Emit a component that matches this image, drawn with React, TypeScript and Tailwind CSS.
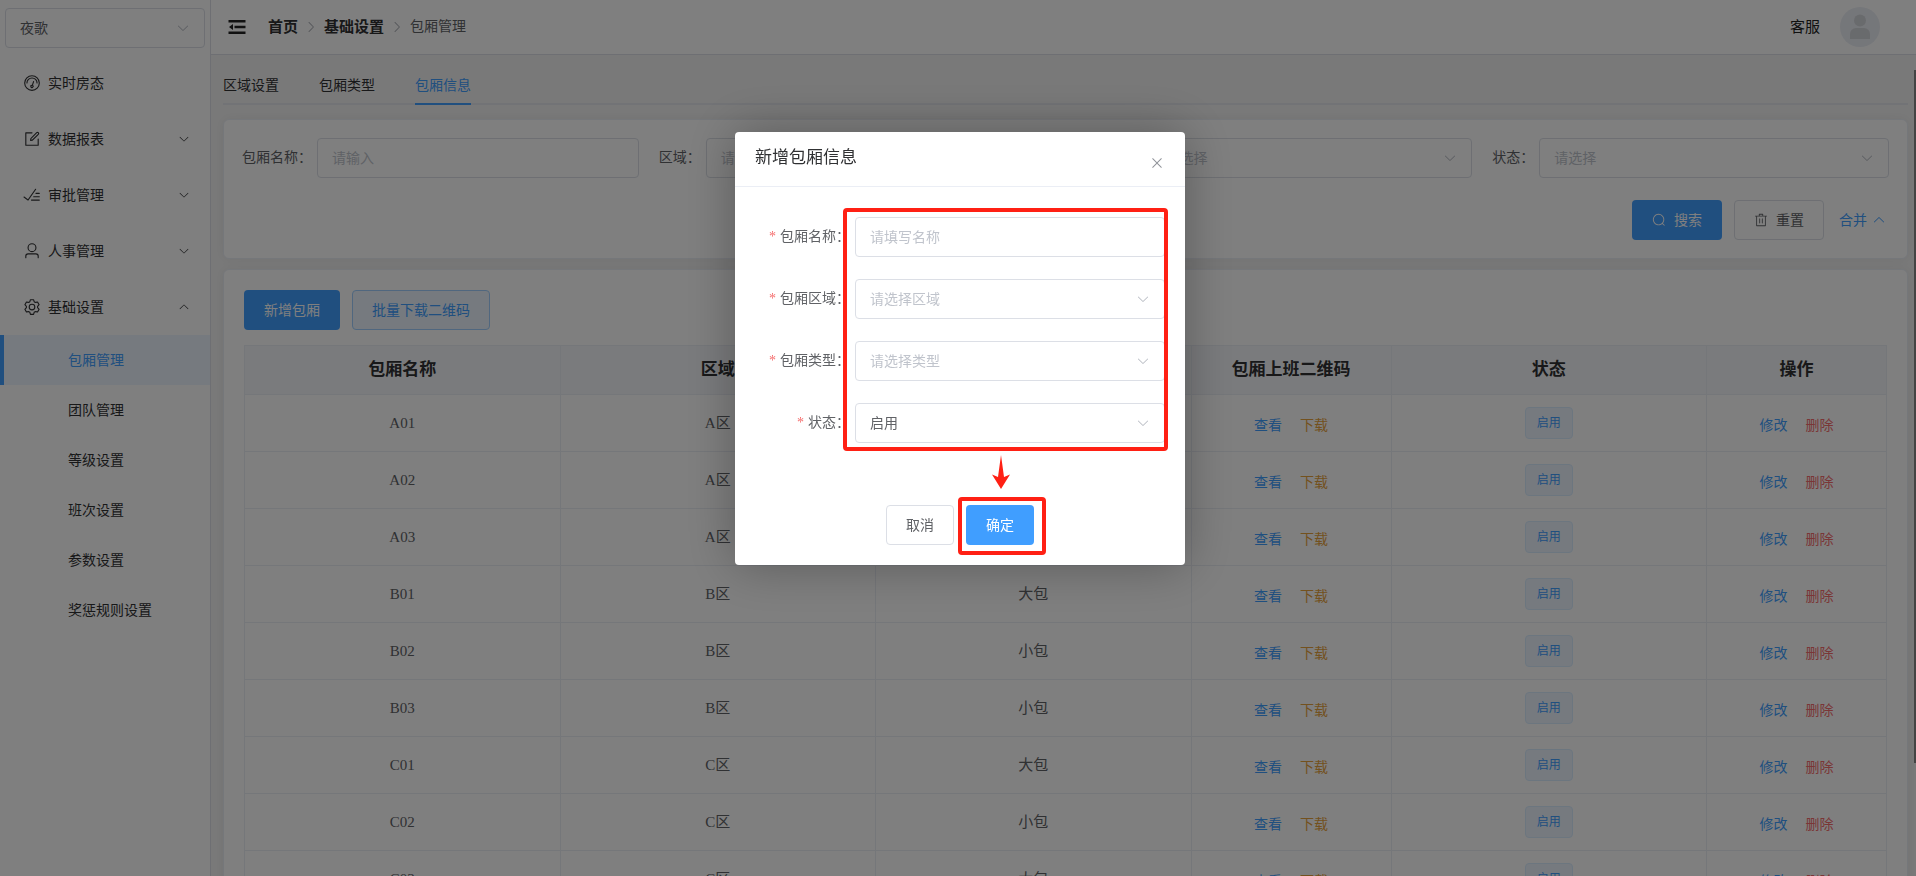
import React from 'react';

const ICONS = {
  odometer:
    'M512 896a384 384 0 1 0 0-768 384 384 0 0 0 0 768m0 64a448 448 0 1 1 0-896 448 448 0 0 1 0 896M192 512a320 320 0 1 1 640 0 32 32 0 1 1-64 0 256 256 0 1 0-512 0 32 32 0 0 1-64 0M570.432 627.84A96 96 0 1 1 509.568 608l60.992-187.776A32 32 0 1 1 631.424 440l-60.992 187.776zM502.08 734.464a32 32 0 1 0 19.84-60.928 32 32 0 0 0-19.84 60.928',
  edit: 'M832 512a32 32 0 1 1 64 0v352a32 32 0 0 1-32 32H160a32 32 0 0 1-32-32V160a32 32 0 0 1 32-32h352a32 32 0 0 1 0 64H192v640h640zM469.952 554.24l52.8-7.552L847.104 222.4a32 32 0 1 0-45.248-45.248L477.44 501.44l-7.552 52.8zm422.4-422.4a96 96 0 0 1 0 135.808l-331.84 331.84a32 32 0 0 1-18.112 9.088L436.8 623.68a32 32 0 0 1-36.224-36.224l15.104-105.6a32 32 0 0 1 9.024-18.112l331.904-331.84a96 96 0 0 1 135.744 0z',
  finished:
    'M280.768 753.728 691.456 167.04a32 32 0 1 1 52.416 36.672L314.24 817.472a32 32 0 0 1-45.44 7.296l-230.4-172.8a32 32 0 0 1 38.4-51.2zM736 448a32 32 0 1 1 0-64h192a32 32 0 1 1 0 64zM608 640a32 32 0 0 1 0-64h319.936a32 32 0 1 1 0 64zM480 832a32 32 0 1 1 0-64h447.936a32 32 0 1 1 0 64z',
  user: 'M512 512a192 192 0 1 0 0-384 192 192 0 0 0 0 384m0 64a256 256 0 1 1 0-512 256 256 0 0 1 0 512m320 320v-96a96 96 0 0 0-96-96H288a96 96 0 0 0-96 96v96a32 32 0 1 1-64 0v-96a160 160 0 0 1 160-160h448a160 160 0 0 1 160 160v96a32 32 0 1 1-64 0',
  setting:
    'M600.704 64a32 32 0 0 1 30.464 22.208l35.2 109.376c14.784 7.232 28.928 15.36 42.432 24.512l112.384-24.192a32 32 0 0 1 34.432 15.36L944.32 364.8a32 32 0 0 1-4.032 37.504l-77.12 85.12a357 357 0 0 1 0 49.024l77.12 85.248a32 32 0 0 1 4.032 37.504l-88.704 153.6a32 32 0 0 1-34.432 15.296L708.8 803.904c-13.44 9.088-27.648 17.28-42.368 24.512l-35.264 109.376A32 32 0 0 1 600.704 960H423.296a32 32 0 0 1-30.464-22.208L357.696 828.48a352 352 0 0 1-42.56-24.64l-112.32 24.256a32 32 0 0 1-34.432-15.36L79.68 659.2a32 32 0 0 1 4.032-37.504l77.12-85.248a357 357 0 0 1 0-48.896l-77.12-85.248A32 32 0 0 1 79.68 364.8l88.704-153.6a32 32 0 0 1 34.432-15.296l112.32 24.256c13.568-9.152 27.776-17.408 42.56-24.64l35.2-109.312A32 32 0 0 1 423.232 64H600.64zm-23.424 64H446.72l-36.352 113.088-24.512 11.968a294 294 0 0 0-34.816 20.096l-22.656 15.36-116.224-25.088-65.28 113.152 79.68 88.192-1.92 27.136a293 293 0 0 0 0 40.192l1.92 27.136-79.808 88.192 65.344 113.152 116.224-25.024 22.656 15.296a294 294 0 0 0 34.816 20.096l24.512 11.968L446.72 896h130.688l36.48-113.152 24.448-11.904a288 288 0 0 0 34.752-20.096l22.592-15.296 116.288 25.024 65.28-113.152-79.744-88.192 1.92-27.136a293 293 0 0 0 0-40.256l-1.92-27.136 79.808-88.128-65.344-113.152-116.288 24.96-22.592-15.232a288 288 0 0 0-34.752-20.096l-24.448-11.904L577.344 128zM512 320a192 192 0 1 1 0 384 192 192 0 0 1 0-384m0 64a128 128 0 1 0 0 256 128 128 0 0 0 0-256',
  search:
    'm795.904 750.72 124.992 124.928a32 32 0 0 1-45.248 45.248L750.656 795.904a416 416 0 1 1 45.248-45.248zM480 832a352 352 0 1 0 0-704 352 352 0 0 0 0 704',
  trash:
    'M160 256H96a32 32 0 0 1 0-64h256V95.936a32 32 0 0 1 32-32h256a32 32 0 0 1 32 32V192h256a32 32 0 1 1 0 64h-64v672a32 32 0 0 1-32 32H192a32 32 0 0 1-32-32zm448-64v-64H416v64zM224 896h576V256H224zm192-128a32 32 0 0 1-32-32V416a32 32 0 0 1 64 0v320a32 32 0 0 1-32 32m192 0a32 32 0 0 1-32-32V416a32 32 0 0 1 64 0v320a32 32 0 0 1-32 32',
  down: 'M831.872 340.864 512 652.672 192.128 340.864a30.592 30.592 0 0 0-42.752 0 29.12 29.12 0 0 0 0 41.6L489.664 714.24a32 32 0 0 0 44.672 0l340.288-331.712a29.12 29.12 0 0 0 0-41.728 30.592 30.592 0 0 0-42.752 0z',
  close:
    'M764.288 214.592 512 466.88 259.712 214.592a31.936 31.936 0 0 0-45.12 45.12L466.752 512 214.528 764.224a31.936 31.936 0 1 0 45.12 45.184L512 557.184l252.288 252.288a31.936 31.936 0 0 0 45.12-45.12L557.12 512.064l252.288-252.352a31.936 31.936 0 1 0-45.12-45.184z',
};

type IconName = keyof typeof ICONS;

const Icon: React.FC<{ name: IconName; className?: string }> = ({ name, className = '' }) => (
  <svg viewBox="0 0 1024 1024" fill="currentColor" className={`shrink-0 ${className}`} aria-hidden="true">
    <path d={ICONS[name]} />
  </svg>
);

const menus: { label: string; icon: IconName; open?: boolean; leaf?: boolean }[] = [
  { label: '实时房态', icon: 'odometer', leaf: true },
  { label: '数据报表', icon: 'edit' },
  { label: '审批管理', icon: 'finished' },
  { label: '人事管理', icon: 'user' },
  { label: '基础设置', icon: 'setting', open: true },
];

const subMenus = ['包厢管理', '团队管理', '等级设置', '班次设置', '参数设置', '奖惩规则设置'];

const tabs = ['区域设置', '包厢类型', '包厢信息'];

const rows = [
  { name: 'A01', area: 'A区', type: '大包' },
  { name: 'A02', area: 'A区', type: '小包' },
  { name: 'A03', area: 'A区', type: '小包' },
  { name: 'B01', area: 'B区', type: '大包' },
  { name: 'B02', area: 'B区', type: '小包' },
  { name: 'B03', area: 'B区', type: '小包' },
  { name: 'C01', area: 'C区', type: '大包' },
  { name: 'C02', area: 'C区', type: '小包' },
  { name: 'C03', area: 'C区', type: '大包' },
];

const controlClass =
  'block w-full h-10 px-3.5 pt-[2px] rounded border border-[#dcdfe6] bg-white text-sm placeholder:text-[#c0c4cc] outline-none';

interface SelectBoxProps {
  id: string;
  value: string;
  filled?: boolean;
  label?: string;
}

const SelectBox: React.FC<SelectBoxProps> = ({ id, value, filled, label }) => (
  <div className="relative flex-1 min-w-0">
    <select
      id={id}
      aria-label={label}
      defaultValue={value}
      className={`${controlClass} appearance-none ${filled ? 'text-[#606266]' : 'text-[#c0c4cc]'}`}
    >
      <option>{value}</option>
    </select>
    <Icon name="down" className="absolute right-[15px] top-[13px] w-3.5 h-3.5 text-[#b4b8c0] pointer-events-none" />
  </div>
);

const Colon: React.FC = () => <span className="inline-block w-3.5 text-left whitespace-nowrap">：</span>;

const Sidebar: React.FC = () => (
  <aside className="w-[211px] shrink-0 bg-white border-r border-[#dcdfe6]">
    <div className="flex px-[5px] pt-2 pb-[7px]">
      <SelectBox id="store" label="门店" value="夜歌" filled />
    </div>
    <nav>
      {menus.map((item) => (
        <a key={item.label} href="#" className="flex items-center h-14 px-5 text-sm text-[#303133]">
          <span className="flex justify-center w-6 mr-1">
            <Icon name={item.icon} className="w-[18px] h-[18px]" />
          </span>
          <span className="flex-1 pt-[2px]">{item.label}</span>
          {!item.leaf && <Icon name="down" className={`w-3 h-3 ${item.open ? 'rotate-180' : ''}`} />}
        </a>
      ))}
      {subMenus.map((label, i) => (
        <a
          key={label}
          href="#"
          className={`flex items-center h-[50px] border-l-4 pl-16 pt-[2px] text-sm ${
            i === 0 ? 'border-[#409eff] bg-[#ecf5ff] text-[#409eff]' : 'border-transparent text-[#303133]'
          }`}
        >
          {label}
        </a>
      ))}
    </nav>
  </aside>
);

const Header: React.FC = () => (
  <header className="flex items-center h-[55px] pl-[17px] pr-9 bg-white border-b border-[#dcdfe6]">
    <button type="button" aria-label="菜单" className="mr-[22px]">
      <svg viewBox="0 0 18 14" className="w-[18px] h-3.5 text-[#222]" fill="currentColor">
        <path d="M.5 0h17v2.600H.5zM6.500 5.700h11v2.600h-11zM.5 11.400h17V14H.5zM5 4v6L1 7z" />
      </svg>
    </button>
    <nav className="flex items-center text-[#303133]">
      <a href="#" className="text-[15px] font-bold">首页</a>
      <Icon name="down" className="w-3.5 h-3.5 mx-[6px] -rotate-90 text-[#a8abb2]" />
      <a href="#" className="text-[15px] font-bold">基础设置</a>
      <Icon name="down" className="w-3.5 h-3.5 mx-[6px] -rotate-90 text-[#a8abb2]" />
      <span className="text-sm text-[#606266]">包厢管理</span>
    </nav>
    <a href="#" className="ml-auto mr-5 text-[15px] text-[#222]">客服</a>
    <svg viewBox="0 0 40 40" className="w-10 h-10">
      <circle cx="20" cy="20" r="20" fill="#ebeef5" />
      <circle cx="20" cy="13.500" r="6" fill="#d3d6db" />
      <path d="M10 32v-5a6 6 0 0 1 6-6h8a6 6 0 0 1 6 6v5z" fill="#d3d6db" />
    </svg>
  </header>
);

const cardClass = 'bg-white border border-[#ebeef5] rounded-md shadow-[0_0_12px_rgba(0,0,0,0.06)]';

const SearchCard: React.FC = () => (
  <section className={`${cardClass} mt-3.5 px-[18px] py-[18px]`}>
    <div className="grid grid-cols-4 gap-5 text-sm text-[#606266]">
      <div className="flex items-center">
        <label htmlFor="q-name" className="shrink-0 pr-[5px]">包厢名称<Colon /></label>
        <input id="q-name" placeholder="请输入" className={controlClass} />
      </div>
      <div className="flex items-center">
        <label htmlFor="q-area" className="shrink-0 pr-[5px]">区域<Colon /></label>
        <SelectBox id="q-area" value="请选择" />
      </div>
      <div className="flex items-center">
        <label htmlFor="q-type" className="shrink-0 pr-[5px]">包厢类型<Colon /></label>
        <SelectBox id="q-type" value="请选择" />
      </div>
      <div className="flex items-center">
        <label htmlFor="q-state" className="shrink-0 pr-[5px]">状态<Colon /></label>
        <SelectBox id="q-state" value="请选择" />
      </div>
    </div>
    <div className="flex justify-end items-center mt-[22px] text-sm">
      <button type="button" className="flex items-center justify-center gap-2 w-[90px] h-10 rounded bg-[#409eff] text-white">
        <Icon name="search" className="w-3.5 h-3.5" />
        <span className="pt-[2px]">搜索</span>
      </button>
      <button
        type="button"
        className="flex items-center justify-center gap-2 w-[90px] h-10 ml-3 rounded border border-[#dcdfe6] text-[#606266]"
      >
        <Icon name="trash" className="w-3.5 h-3.5" />
        <span className="pt-[2px]">重置</span>
      </button>
      <button type="button" className="flex items-center gap-[5px] ml-[15px] mr-[3px] text-[#409eff]">
        <span className="pt-[2px]">合并</span>
        <Icon name="down" className="w-3.5 h-3.5 rotate-180" />
      </button>
    </div>
  </section>
);

const TableCard: React.FC = () => (
  <section className={`${cardClass} mt-[10px] p-5`}>
    <div className="flex gap-3 text-sm">
      <button type="button" className="h-10 px-5 pt-[2px] rounded bg-[#409eff] text-white">新增包厢</button>
      <button type="button" className="h-10 px-[19px] pt-[2px] rounded border border-[#a0cfff] bg-[#ecf5ff] text-[#409eff]">
        批量下载二维码
      </button>
    </div>
    <table className="w-full mt-[15px] table-fixed border-collapse text-center text-[15px] text-[#606266] [&_td]:border [&_td]:border-[#ebeef5] [&_th]:border [&_th]:border-[#ebeef5]">
      <colgroup>
        <col />
        <col />
        <col />
        <col className="w-[200px]" />
        <col />
        <col className="w-[180px]" />
      </colgroup>
      <thead>
        <tr className="h-[49px] bg-[#f5f7fa] text-[17px] text-[#303133]">
          <th>包厢名称</th>
          <th>区域</th>
          <th>类型</th>
          <th>包厢上班二维码</th>
          <th>状态</th>
          <th>操作</th>
        </tr>
      </thead>
      <tbody>
        {rows.map((row) => (
          <tr key={row.name} className="h-[57px]">
            <td>{row.name}</td>
            <td>{row.area}</td>
            <td>{row.type}</td>
            <td>
              <div className="flex justify-center gap-[18px] pt-[6px] text-sm">
                <a href="#" className="text-[#409eff]">查看</a>
                <a href="#" className="text-[#e6a23c]">下载</a>
              </div>
            </td>
            <td>
              <span className="inline-flex items-center justify-center w-12 h-8 rounded border border-[#d9ecff] bg-[#ecf5ff] text-xs text-[#409eff] align-middle">
                启用
              </span>
            </td>
            <td>
              <div className="flex justify-center gap-[18px] pt-[6px] text-sm">
                <a href="#" className="text-[#409eff]">修改</a>
                <a href="#" className="text-[#f56c6c]">删除</a>
              </div>
            </td>
          </tr>
        ))}
      </tbody>
    </table>
  </section>
);

const Field: React.FC<{ id: string; label: string; children: React.ReactNode }> = ({ id, label, children }) => (
  <div className="flex items-center">
    <label htmlFor={id} className="w-[100px] shrink-0 pr-[5px] text-right">
      <span className="mr-1 text-[#f56c6c]">*</span>
      {label}
      <Colon />
    </label>
    {children}
  </div>
);

const RoomDialog: React.FC = () => (
  <div className="fixed inset-0 z-10 flex justify-center items-start pl-1 bg-black/50">
    <div
      role="dialog"
      aria-label="新增包厢信息"
      className="relative w-[450px] mt-[132px] rounded-sm bg-white text-sm text-[#606266] shadow-[0_0_50px_rgba(0,0,0,0.3)]"
    >
      <div className="flex justify-between h-[55px] px-5 border-b border-[#ebeef5]">
        <h2 className="pt-[10px] text-[17px] leading-8 text-[#303133]">新增包厢信息</h2>
        <button type="button" aria-label="关闭" className="pt-2 text-[#909399]">
          <Icon name="close" className="w-4 h-4" />
        </button>
      </div>
      <form className="flex flex-col gap-[22px] px-5 pt-[30px]">
        <Field id="room-name" label="包厢名称">
          <input id="room-name" placeholder="请填写名称" className={controlClass} />
        </Field>
        <Field id="room-area" label="包厢区域">
          <SelectBox id="room-area" value="请选择区域" />
        </Field>
        <Field id="room-type" label="包厢类型">
          <SelectBox id="room-type" value="请选择类型" />
        </Field>
        <Field id="room-state" label="状态">
          <SelectBox id="room-state" value="启用" filled />
        </Field>
      </form>
      <div className="flex justify-center gap-3 pt-[62px] pb-5">
        <button type="button" className="w-[68px] h-10 pt-[2px] rounded border border-[#dcdfe6] bg-white">取消</button>
        <button type="button" className="w-[68px] h-10 pt-[2px] rounded bg-[#409eff] text-white">确定</button>
      </div>

      {/* guide marks: fill the form, then confirm */}
      <div className="absolute left-[108px] top-[76px] w-[325px] h-[243px] rounded border-4 border-[#ff2014] pointer-events-none" />
      <svg viewBox="0 0 18 34" className="absolute left-[257px] top-[323px] w-[18px] h-[34px]" fill="#ff2014">
        <path d="M9 0 12 22 18 19.500 9 34 0 19.500 6 22z" />
      </svg>
      <div className="absolute left-[223px] top-[365px] w-[88px] h-[58px] rounded border-4 border-[#ff2014] pointer-events-none" />
    </div>
  </div>
);

const App: React.FC = () => {
  return (
    <div className="relative flex h-screen overflow-hidden bg-[#f3f3f3] font-['Liberation_Serif','Noto_Sans_CJK_SC',sans-serif]">
      <Sidebar />
      <div className="flex-1 min-w-0">
        <Header />
        <main className="pl-3 pr-2 pt-[10px]">
          <nav className="flex gap-10 h-10 border-b-2 border-[#e4e7ed] text-sm text-[#303133]">
            {tabs.map((tab, i) => (
              <a
                key={tab}
                href="#"
                className={`flex items-center h-10 pt-1 border-b-2 ${
                  i === 2 ? 'border-[#409eff] text-[#409eff]' : 'border-transparent'
                }`}
              >
                {tab}
              </a>
            ))}
          </nav>
          <SearchCard />
          <TableCard />
        </main>
      </div>
      <div className="absolute right-0 top-[70px] w-[2px] h-[693px] bg-[#888]" />
      <RoomDialog />
    </div>
  );
};

export default App;
